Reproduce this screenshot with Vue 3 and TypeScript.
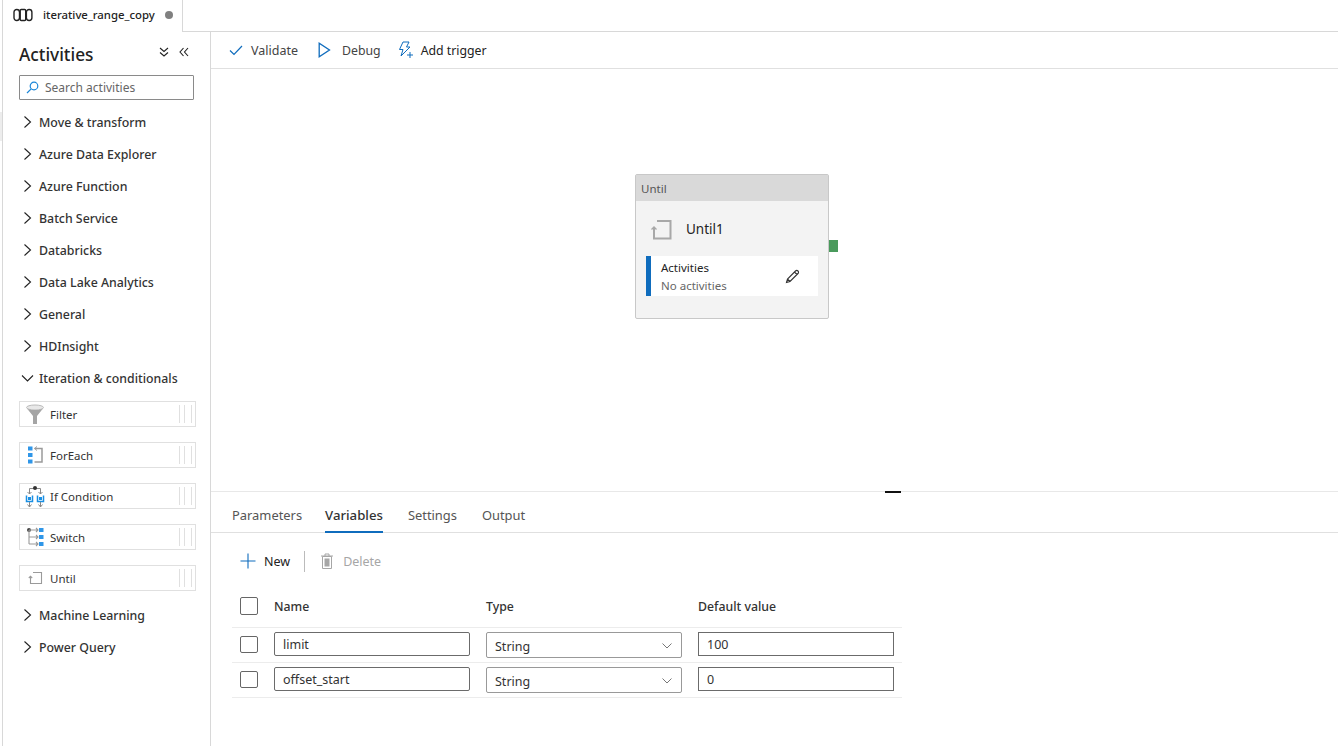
<script setup lang="ts">
const topGroups: string[] = ['Move & transform','Azure Data Explorer','Azure Function','Batch Service','Databricks','Data Lake Analytics','General','HDInsight']
const endGroups: string[] = ['Machine Learning','Power Query']
const tabs: string[] = ['Parameters','Variables','Settings','Output']
const rows = [{ name: 'limit', type: 'String', value: '100' }, { name: 'offset_start', type: 'String', value: '0' }]
</script>

<template>
  <div class="app">
    <div class="edge"><i class="edge-mark"></i></div>
    <div class="shell">
      <div class="tabstrip">
        <div class="doc-tab">
          <svg width="20" height="14" viewBox="0 0 20 14" fill="none" stroke="#222" stroke-width="1.4"><rect x="1" y="1.5" width="5.5" height="11" rx="2.7"/><rect x="7.2" y="1.5" width="5.5" height="11" rx="1"/><rect x="13.4" y="1.5" width="5.5" height="11" rx="2.7"/></svg>
          <span class="doc-name">iterative_range_copy</span>
          <span class="dot"></span>
        </div>
        <div class="tab-rest"></div>
      </div>
      <div class="body">
        <aside class="side">
          <div class="side-head">
            <h1>Activities</h1>
            <svg width="10" height="10" viewBox="0 0 10 10" fill="none" stroke="#222" stroke-width="1.1" class="hd-ic1"><path d="M1 1 5 4.500 9 1M1 5.500 5 9l4-3.500"/></svg>
            <svg width="10" height="10" viewBox="0 0 10 10" fill="none" stroke="#222" stroke-width="1.1" class="hd-ic2"><path d="M4.500 1 1 5l3.500 4M9 1 5.500 5 9 9"/></svg>
          </div>
          <div class="search">
            <svg width="13" height="13" viewBox="0 0 13 13" fill="none" stroke="#1a86d8" stroke-width="1.200"><circle cx="8" cy="5" r="3.800"/><path d="M5.200 7.800 1 12"/></svg>
            <span>Search activities</span>
          </div>
          <div class="group" v-for="g in topGroups" :key="g">
            <svg width="9" height="14" viewBox="0 0 9 14" fill="none" stroke="#222" stroke-width="1.100"><path d="M1.500 1.500 7.500 7l-6 5.500"/></svg>
            <span>{{ g }}</span>
          </div>
          <div class="group open">
            <svg width="13" height="9" viewBox="0 0 13 9" fill="none" stroke="#222" stroke-width="1.100"><path d="M1 1.500 6.500 7 12 1.500"/></svg>
            <span>Iteration &amp; conditionals</span>
          </div>
          <div class="cards">
            <div class="card">
              <svg class="ci" width="20" height="21" viewBox="0 0 20 21"><ellipse cx="10" cy="3.500" rx="8.500" ry="2.500" fill="#e8e8e8" stroke="#bbb"/><path d="M2 4.500c3 2 13 2 16 0l-6 7.500v8h-4v-8z" fill="#a5a5a5"/></svg>
              <span>Filter</span><i class="grip"></i>
            </div>
            <div class="card">
              <svg class="ci" width="20" height="20" viewBox="0 0 20 20" fill="none"><rect x="3" y="1.500" width="4.500" height="4" fill="#2f96e8"/><rect x="3" y="8" width="4.500" height="4" fill="#2f96e8"/><rect x="3" y="14.500" width="4.500" height="4" fill="#2f96e8"/><path d="M9.500 3.500h7.500v13.500H9.500" stroke="#9a9a9a" stroke-width="1.500"/><path d="M12 1.500 9.500 3.500 12 5.500" stroke="#9a9a9a"/></svg>
              <span>ForEach</span><i class="grip"></i>
            </div>
            <div class="card">
              <svg class="ci tall" width="20" height="23" viewBox="0 0 20 23" fill="none"><path d="M4.500 9V3.500h11V9M2.500 7l2 2 2-2M13.500 7l2 2 2-2" stroke="#888"/><circle cx="10" cy="3" r="2" fill="#333"/><path d="M1.500 10.500v6h6v-6M12.500 10.500v6h6v-6" stroke="#1a8fe3" stroke-width="1.500"/><rect x="3" y="12" width="3" height="3" fill="#1a8fe3"/><rect x="14" y="12" width="3" height="3" fill="#1a8fe3"/><path d="M4.500 17v5M15.500 17v5M2.500 19.500l2 2.500 2-2.500M13.500 19.500l2 2.500 2-2.500" stroke="#888"/></svg>
              <span>If Condition</span><i class="grip"></i>
            </div>
            <div class="card">
              <svg class="ci" width="20" height="20" viewBox="0 0 20 20" fill="none"><circle cx="4" cy="3" r="2" fill="#444"/><path d="M4 3v14M4 3h9M4 10h9M4 17h9M11 1l2 2-2 2M11 8l2 2-2 2M11 15l2 2-2 2" stroke="#999" stroke-width="1.100"/><rect x="14" y="1" width="4.500" height="4" fill="#2f96e8"/><rect x="14" y="8" width="4.500" height="4" fill="#2f96e8"/><rect x="14" y="15" width="4.500" height="4" fill="#2f96e8"/></svg>
              <span>Switch</span><i class="grip"></i>
            </div>
            <div class="card">
              <svg class="ci" width="20" height="14" viewBox="0 0 14 14" fill="none" stroke="#9a9a9a" stroke-width="1.100"><path d="M4 1.500h8.500v11H1.500V5.500M-.2 7 1.500 5.200 3.200 7" transform="translate(1 0)"/></svg>
              <span>Until</span><i class="grip"></i>
            </div>
          </div>
          <div class="group" v-for="g in endGroups" :key="g">
            <svg width="9" height="14" viewBox="0 0 9 14" fill="none" stroke="#222" stroke-width="1.100"><path d="M1.500 1.500 7.500 7l-6 5.500"/></svg>
            <span>{{ g }}</span>
          </div>
        </aside>

        <main class="main">
          <div class="toolbar">
            <button class="tb">
              <svg width="14" height="11" viewBox="0 0 14 11" fill="none" stroke="#0f6cbd" stroke-width="1.200"><path d="M1 5.500 5 9.500 13 1"/></svg>
              <span class="muted">Validate</span>
            </button>
            <button class="tb debug">
              <svg width="13" height="16" viewBox="0 0 13 16" fill="none" stroke="#0f6cbd" stroke-width="1.300"><path d="M1.200 1.300v13.400L11.500 8z"/></svg>
              <span class="muted">Debug</span>
            </button>
            <button class="tb trigger">
              <svg width="16" height="18" viewBox="0 0 16 18" fill="none" stroke="#0f6cbd" stroke-width="1"><path d="M5 1h6L8.500 6H12L3 15l2-6.500H1.500z"/><path d="M12 11v6M9 14h6"/></svg>
              <span>Add trigger</span>
            </button>
          </div>
          <div class="canvas">
            <div class="node">
              <div class="node-head">Until</div>
              <div class="node-title">
                <svg width="21" height="21" viewBox="0 0 21 21" fill="none" stroke="#a8a8a8" stroke-width="2"><path d="M6 2h13.500v17.500H3V9"/><path d="M.5 10.500 3 8l2.500 2.500" stroke-width="1.300"/></svg>
                <span>Until1</span>
              </div>
              <div class="node-act">
                <div class="node-act-text">
                  <div>Activities</div>
                  <div class="na">No activities</div>
                </div>
                <svg width="15" height="15" viewBox="0 0 15 15" fill="none" stroke="#333" stroke-width="1.100"><path d="M1.500 13.500 2.500 10 10.500 2a1.400 1.400 0 0 1 2.500 2.500L5 12.500zM2.500 10 5 12.500M9.500 3l2.500 2.500"/></svg>
              </div>
              <div class="port"></div>
            </div>
          </div>
          <section class="panel">
            <i class="sash"></i>
            <nav class="ptabs">
              <a v-for="t in tabs" :key="t" :class="{ on: t === 'Variables' }">{{ t }}</a>
            </nav>
            <div class="actions">
              <span class="act">
                <svg width="16" height="16" viewBox="0 0 16 16" stroke="#0f6cbd" stroke-width="1.100"><path d="M8 .5v15M.5 8h15"/></svg>
                New
              </span>
              <i class="vr"></i>
              <span class="act off">
                <svg width="14" height="16" viewBox="0 0 14 16"><path d="M1 3h12M5 3V1h4v2" fill="none" stroke="#a6a6a6"/><path d="M2.500 3.500h9v12h-9z" fill="none" stroke="#a6a6a6"/><rect x="4.500" y="5.500" width="5" height="8" fill="#a6a6a6"/></svg>
                Delete
              </span>
            </div>
            <div class="table">
              <div class="tr th">
                <span class="c0"><i class="cb"></i></span>
                <span class="c1">Name</span>
                <span class="c2">Type</span>
                <span class="c3">Default value</span>
              </div>
              <div class="tr td" v-for="r in rows" :key="r.name">
                <span class="c0"><i class="cb small"></i></span>
                <span class="c1"><span class="inp rounded">{{ r.name }}</span></span>
                <span class="c2"><span class="sel">{{ r.type }}<svg width="10" height="6" viewBox="0 0 10 6" fill="none" stroke="#777"><path d="M.5.500 5 5 9.500.500"/></svg></span></span>
                <span class="c3"><span class="inp">{{ r.value }}</span></span>
              </div>
            </div>
          </section>
        </main>
      </div>
    </div>
  </div>
</template>

<style>
html, body { margin: 0; background: #fff; }
</style>

<style scoped>
.app { display: flex; width: 1338px; height: 746px; overflow: hidden; background: #fff; color: #262626; font: 12.500px "Noto Sans", "Open Sans", sans-serif; }
.edge { width: 2px; flex: none; border-right: 1px solid #d8d8d8; }
.edge-mark { display: block; width: 2px; height: 29px; margin-top: 112px; background: #ededed; }
.shell { flex: 1; display: flex; flex-direction: column; min-width: 0; }
.tabstrip { height: 32px; display: flex; flex: none; }
.doc-tab { width: 180px; border-right: 1px solid #d8d8d8; display: flex; align-items: center; padding: 0 0 3px 10px; box-sizing: border-box; }
.doc-name { margin-left: 10px; font-size: 11.350px; color: #222; font-weight: 500; }
.dot { width: 8px; height: 8px; border-radius: 50%; background: #808080; margin-left: 10px; }
.tab-rest { flex: 1; border-bottom: 1px solid #d8d8d8; }
.body { flex: 1; display: flex; min-height: 0; }
.side { width: 208px; flex: none; border-right: 1px solid #d8d8d8; box-sizing: border-box; padding: 0 14px 0 16px; }
.side-head { height: 43px; display: flex; align-items: center; }
.side-head h1 { margin: 0; font-size: 17.300px; font-weight: 500; color: #222; flex: 1; padding-top: 2px; }
.hd-ic1 { margin: 0 10px 3px 0; }
.hd-ic2 { margin: 0 7px 3px 0; }
.search { width: 175px; height: 25px; box-sizing: border-box; border: 1px solid #8a8a8a; border-radius: 1px; display: flex; align-items: center; padding-left: 6px; gap: 6px; color: #666; font-size: 12px; margin-bottom: 6px; }
.group { height: 32px; display: flex; align-items: center; font-weight: 500; font-size: 12.350px; color: #333; white-space: nowrap; }
.group svg { margin: 0 7px 0 4px; flex: none; }
.group.open { font-size: 12.300px; }
.group.open svg { margin: 0 5px 0 2px; }
.cards { display: flex; flex-direction: column; gap: 15px; margin: 7px 0 8px; }
.card { height: 26px; border: 1px solid #e0e0e0; box-sizing: border-box; display: flex; align-items: center; padding-left: 5px; font-size: 11.500px; color: #333; position: relative; }
.ci { margin-right: 5px; flex: none; }
.grip { position: absolute; right: 3px; top: 3px; bottom: 3px; width: 11px; border-left: 1px solid #e0e0e0; border-right: 1px solid #e0e0e0; }
.grip::after { content: ""; position: absolute; left: 4px; top: 0; bottom: 0; border-left: 1px solid #e0e0e0; }
.main { flex: 1; min-width: 0; display: flex; flex-direction: column; }
.toolbar { height: 36px; flex: none; border-bottom: 1px solid #e0e0e0; display: flex; align-items: center; padding-left: 18px; gap: 17px; }
.tb { all: unset; display: flex; align-items: center; gap: 8px; font-size: 12.500px; color: #222; }
.tb .muted { color: #444; }
.tb.debug { margin-left: 3px; gap: 11px; font-size: 12.300px; }
.tb.trigger { gap: 7px; font-size: 12.300px; }
.canvas { flex: 1; position: relative; min-height: 0; }
.node { position: absolute; left: 424px; top: 105px; width: 194px; height: 145px; box-sizing: border-box; border: 1px solid #c8c8c8; border-radius: 2px; background: #f3f3f3; display: flex; flex-direction: column; }
.node-head { height: 26px; flex: none; background: #d9d9d9; color: #555; font-size: 11.500px; line-height: 28px; padding-left: 5px; }
.node-title { height: 55px; flex: none; display: flex; align-items: center; padding-left: 15px; gap: 14px; font-size: 13.500px; color: #222; }
.node-title svg { margin-top: 1px; }
.node-act { margin: 0 10px; height: 40px; box-sizing: border-box; border-left: 5px solid #0f6cbd; background: #fff; display: flex; align-items: center; justify-content: space-between; padding: 0 18px 0 10px; font-size: 11.500px; line-height: 18px; color: #222; }
.node-act-text { padding-top: 2px; }
.na { color: #666; }
.port { position: absolute; left: 193px; top: 65px; width: 9px; height: 12px; background: #4a9a5c; }
.panel { height: 255px; flex: none; border-top: 1px solid #e8e8e8; box-sizing: border-box; position: relative; }
.sash { position: absolute; left: 674px; top: -1px; width: 16px; height: 2px; background: #111; }
.ptabs { height: 41px; box-sizing: border-box; border-bottom: 1px solid #e0e0e0; display: flex; gap: 24px; padding-left: 21px; }
.ptabs a { height: 41px; box-sizing: border-box; line-height: 46px; font-size: 12.900px; color: #555; }
.ptabs a:nth-child(2) { margin-left: -1px; }
.ptabs a:nth-child(3) { margin-left: 1px; }
.ptabs a:nth-child(4) { margin-left: 1px; }
.ptabs a.on { color: #333; font-weight: 500; font-size: 13.200px; border-bottom: 2px solid #0f6cbd; }
.actions { height: 56px; display: flex; align-items: center; padding-left: 29px; }
.act { display: flex; align-items: center; gap: 8px; font-size: 12.500px; color: #222; }
.act.off { color: #a6a6a6; gap: 9px; }
.vr { width: 1px; height: 21px; background: #bbb; margin: 0 15px 0 14px; }
.table { margin-left: 21px; width: 670px; }
.tr { display: flex; align-items: center; box-sizing: border-box; }
.th { height: 39px; border-bottom: 1px solid #ececec; font-weight: 500; font-size: 12.300px; color: #333; padding-bottom: 4px; }
.td { height: 35px; border-bottom: 1px solid #ececec; padding-bottom: 2px; }
.c0 { width: 42px; padding-left: 8px; box-sizing: border-box; display: flex; flex: none; }
.c1, .c2 { width: 212px; flex: none; }
.c3 { flex: 1; }
.cb { width: 18px; height: 18px; box-sizing: border-box; border: 1px solid #666; border-radius: 2px; display: block; }
.cb.small { height: 17px; }
.inp, .sel { display: flex; align-items: center; box-sizing: border-box; border: 1px solid #6b6b6b; font-size: 12.500px; color: #333; padding-left: 8px; }
.inp { width: 196px; height: 24px; }
.inp.rounded { border-radius: 2px; }
.sel { width: 196px; height: 26px; border-color: #999; border-radius: 2px; justify-content: space-between; padding-right: 9px; margin-top: 2px; padding-top: 2px; }
</style>
